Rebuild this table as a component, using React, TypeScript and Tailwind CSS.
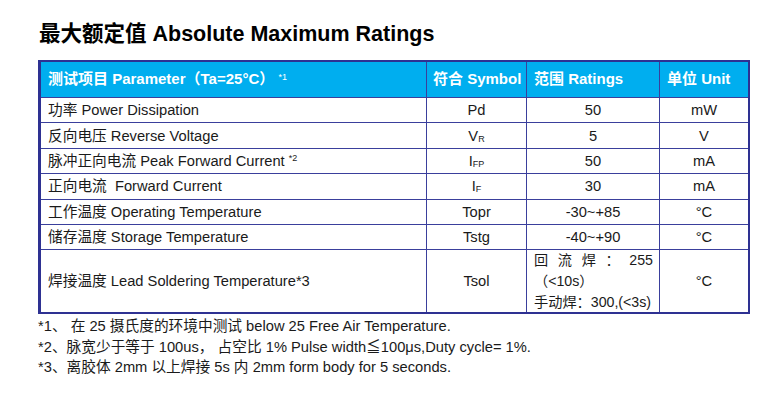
const font = { fontFamily: '"Liberation Sans", "Noto Sans CJK SC", sans-serif' };

type Row = {
  name: React.ReactNode;
  symbol: React.ReactNode;
  rating: React.ReactNode;
  unit: string;
};

const Sub = ({ children }: { children: React.ReactNode }) => (
  <span className="text-[9px] align-[-1px]">{children}</span>
);

const rows: Row[] = [
  { name: "功率 Power Dissipation", symbol: "Pd", rating: "50", unit: "mW" },
  { name: "反向电压 Reverse Voltage", symbol: <>V<Sub>R</Sub></>, rating: "5", unit: "V" },
  {
    name: (
      <>
        脉冲正向电流 Peak Forward Current <sup className="text-[9px]">*2</sup>
      </>
    ),
    symbol: <>I<Sub>FP</Sub></>,
    rating: "50",
    unit: "mA",
  },
  { name: <>正向电流&nbsp; Forward Current</>, symbol: <>I<Sub>F</Sub></>, rating: "30", unit: "mA" },
  { name: "工作温度 Operating Temperature", symbol: "Topr", rating: "-30~+85", unit: "°C" },
  { name: "储存温度 Storage Temperature", symbol: "Tstg", rating: "-40~+90", unit: "°C" },
];

export default function App() {
  return (
    <div className="w-[784px] h-[412px] bg-white text-[#1a1a1a]" style={font}>
      <div className="pl-[39px] pt-[21px]">
        <h1 className="text-[21.5px] leading-[26px] font-bold text-black">
          最大额定值 Absolute Maximum Ratings
        </h1>
      </div>

      {/* table */}
      <div className="ml-[38px] mt-[13px] w-[712px] border-2 border-l-[3px] border-[#2e3192] text-[14.7px]">
        <div className="flex h-[36px] bg-[#00aeef] text-white font-bold text-[15px] border-b border-[#3a3f9c]">
          <div className="w-[386px] flex items-center pl-[7px] border-r border-[#3a3f9c]">
            <span>
              测试项目 Parameter（Ta=25°C） <sup className="relative -top-[4px] text-[9px] font-normal">*1</sup>
            </span>
          </div>
          <div className="w-[100px] flex items-center pl-[6px] border-r border-[#3a3f9c]">符合 Symbol</div>
          <div className="w-[133px] flex items-center pl-[7px] border-r border-[#3a3f9c]">范围 Ratings</div>
          <div className="flex-1 flex items-center pl-[7px]">单位 Unit</div>
        </div>

        {rows.map((r, i) => (
          <div key={i} className="flex h-[25.4px] border-b border-[#3a3f9c]">
            <div className="w-[386px] flex items-center pl-[7px] border-r border-[#3a3f9c]">
              <span>{r.name}</span>
            </div>
            <div className="w-[100px] flex items-center justify-center border-r border-[#3a3f9c]">
              <span>{r.symbol}</span>
            </div>
            <div className="w-[133px] flex items-center justify-center border-r border-[#3a3f9c]">{r.rating}</div>
            <div className="flex-1 flex items-center justify-center">{r.unit}</div>
          </div>
        ))}

        <div className="flex h-[62px]">
          <div className="w-[386px] flex items-center pl-[7px] border-r border-[#3a3f9c]">
            焊接温度 Lead Soldering Temperature*3
          </div>
          <div className="w-[100px] flex items-center justify-center border-r border-[#3a3f9c]">Tsol</div>
          <div className="w-[133px] flex flex-col justify-center pl-[7px] pr-[6px] text-[14.2px] leading-[21px] whitespace-nowrap border-r border-[#3a3f9c]">
            <div className="flex justify-between">
              <span>回</span>
              <span>流</span>
              <span>焊</span>
              <span>：</span>
              <span>255</span>
            </div>
            <div>（&lt;10s）</div>
            <div>手动焊：300,(&lt;3s)</div>
          </div>
          <div className="flex-1 flex items-center justify-center">°C</div>
        </div>
      </div>

      {/* notes */}
      <div className="pl-[38px] pt-[2px] text-[14.7px] leading-[20.5px]">
        <p>*1、 在 25 摄氏度的环境中测试 below 25 Free Air Temperature.</p>
        <p>*2、脉宽少于等于 100us， 占空比 1% Pulse width≦100μs,Duty cycle= 1%.</p>
        <p>*3、离胶体 2mm 以上焊接 5s 内 2mm form body for 5 seconds.</p>
      </div>
    </div>
  );
}
